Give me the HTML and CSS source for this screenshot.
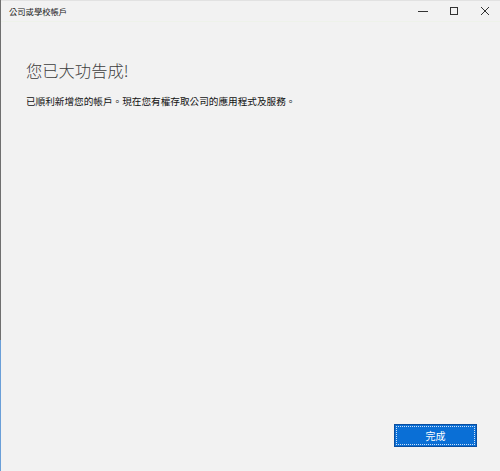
FILE: index.html
```html
<!DOCTYPE html>
<html lang="zh-Hant">
<head>
<meta charset="utf-8">
<link rel="stylesheet" href="styles.css">
</head>
<body>
<div class="window">
  <div class="titlebar">
    <span class="title">公司或學校帳戶</span>
    <div class="controls">
      <span class="ctl"><svg width="10" height="10" viewBox="0 0 10 10"><path d="M0 5.5h10" stroke="#333" stroke-width="1"/></svg></span>
      <span class="ctl"><svg width="10" height="10" viewBox="0 0 10 10"><rect x="1.5" y="1.5" width="7" height="7" fill="none" stroke="#333" stroke-width="1"/></svg></span>
      <span class="ctl"><svg width="10" height="10" viewBox="0 0 10 10"><path d="M1 1L9 9M9 1L1 9" stroke="#333" stroke-width="1"/></svg></span>
    </div>
  </div>
  <div class="content">
    <h1 class="heading">您已大功告成!</h1>
    <p class="desc">已順利新增您的帳戶。現在您有權存取公司的應用程式及服務。</p>
    <div class="spacer"></div>
    <div class="footer">
      <button class="btn"><span class="focus">完成</span></button>
    </div>
  </div>
</div>
</body>
</html>
```
FILE: styles.css
```css
html, body {
  margin: 0;
  padding: 0;
  width: 500px;
  height: 471px;
  overflow: hidden;
  background: #f0f0f0;
}
.window {
  width: 500px;
  height: 471px;
  box-sizing: border-box;
  display: flex;
  flex-direction: column;
  border-left: 1px solid transparent;
  border-image: linear-gradient(to bottom, #6f6f6f 0, #6f6f6f 340px, #6a9fd8 340px, #6a9fd8 100%) 1;
  border-top: 0;
  border-right: 0;
  border-bottom: 0;
  background: #f2f2f2;
  font-family: "Noto Sans CJK TC", "Liberation Sans", sans-serif;
}
.titlebar {
  height: 22px;
  display: flex;
  align-items: center;
  justify-content: space-between;
  border-top: 1px solid #e2e2e2;
  border-bottom: 1px solid #eef2ea;
  box-sizing: border-box;
  padding-left: 8px;
}
.title {
  font-size: 8.3px;
  color: #222;
}
.controls {
  display: flex;
  height: 100%;
  align-items: center;
}
.ctl {
  width: 31px;
  display: flex;
  justify-content: center;
  align-items: center;
}
.ctl svg { display: block; }
.content {
  flex: 1;
  display: flex;
  flex-direction: column;
  padding: 0 23px 24px 25px;
}
.heading {
  margin: 35px 0 0 0;
  font-size: 16.3px;
  font-weight: 300;
  color: #3c3c3c;
  line-height: 26px;
}
.desc {
  margin: 10px 0 0 0;
  font-size: 9.65px;
  color: #111;
  line-height: 16px;
}
.spacer { flex: 1; }
.footer {
  display: flex;
  justify-content: flex-end;
}
.btn {
  width: 83px;
  height: 23px;
  padding: 1px;
  margin: 0;
  background: #0a6fd6;
  border: 1px solid #0b4e9e;
  box-sizing: border-box;
  display: flex;
  cursor: default;
}
.focus {
  flex: 1;
  border: 1px dotted #cfe0f4;
  color: #fff;
  font-family: "Noto Sans CJK TC", sans-serif;
  font-size: 10px;
  display: flex;
  align-items: center;
  justify-content: center;
}
```
